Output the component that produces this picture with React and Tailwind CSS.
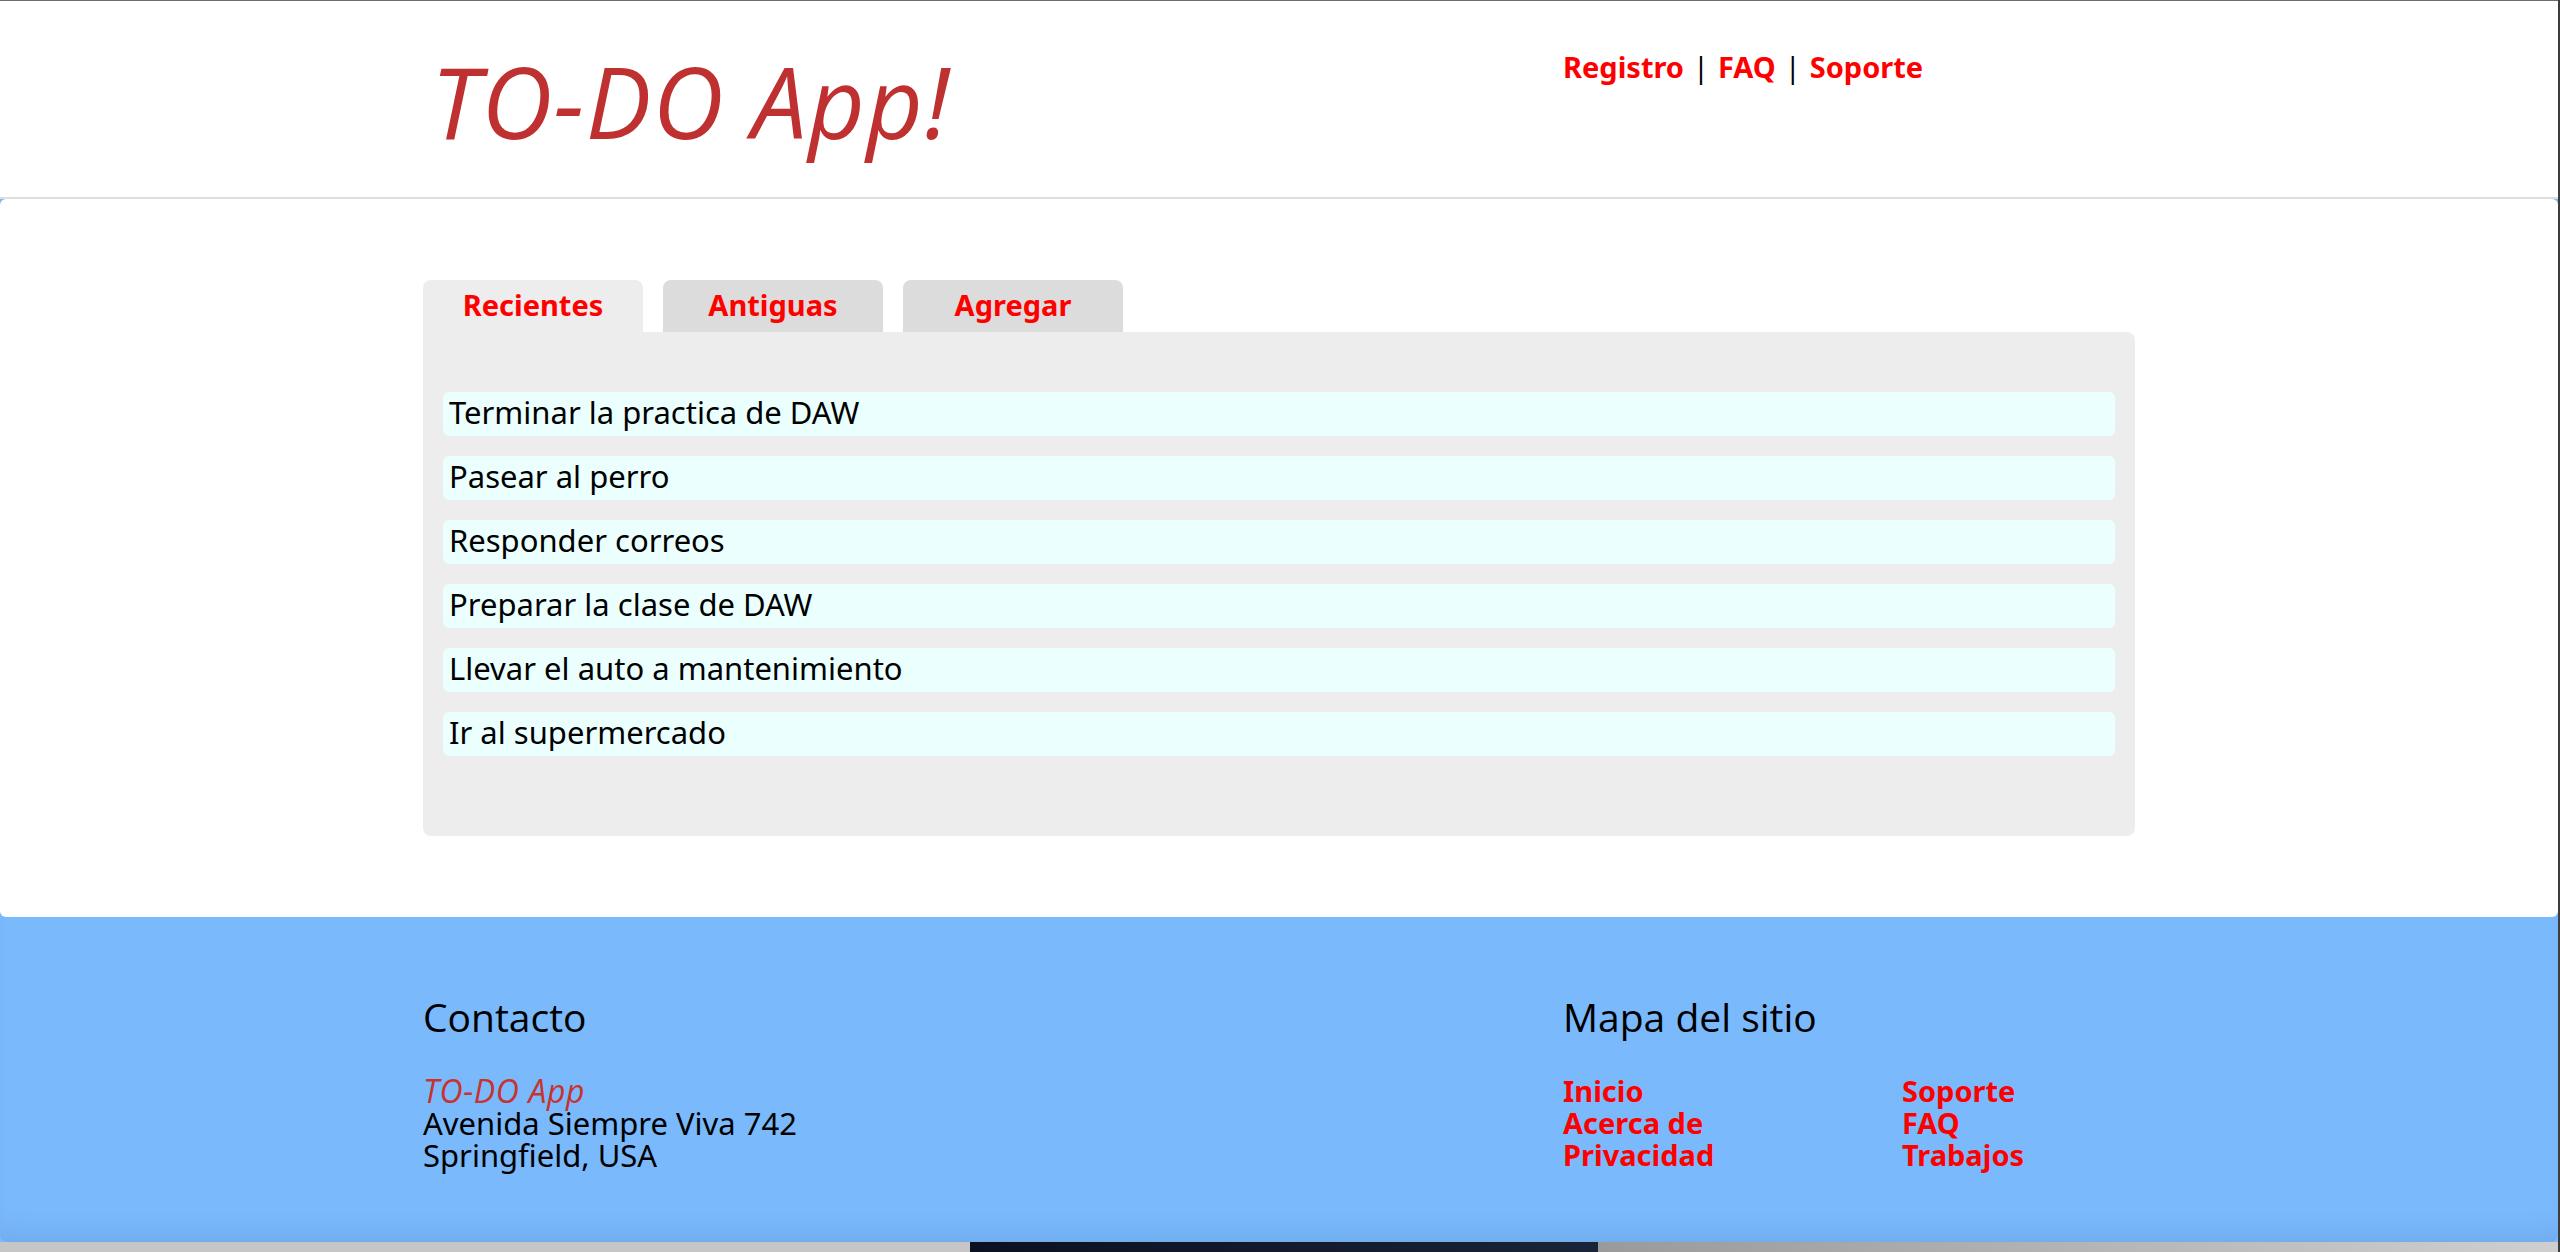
export default function App() {
  const tasks = [
    "Terminar la practica de DAW",
    "Pasear al perro",
    "Responder correos",
    "Preparar la clase de DAW",
    "Llevar el auto a mantenimiento",
    "Ir al supermercado",
  ];
  const tabs = ["Recientes", "Antiguas", "Agregar"];
  return (
    <div className="w-full h-[1252px] overflow-hidden bg-[#79b9fc] font-['Noto_Sans',sans-serif] flex flex-col border-r-2 border-[#3c3c3c]">
      <header className="h-[199px] shrink-0 bg-white border-t border-t-[#6b6d68] border-b-2 border-b-[#dedede]">
        <div className="w-[1712px] mx-auto flex items-start">
          <h1 className="w-[1140px] mt-[51px] text-[98px] leading-[98px] tracking-[1.5px] italic font-normal text-[#bf3030] font-['Open_Sans',sans-serif] pl-[8px]">
            TO-DO App!
          </h1>
          <nav className="mt-[50px] text-[29px] leading-[32px] flex items-start">
            <a className="font-bold text-[#ff0000]">Registro</a>
            <span className="mx-[9px] text-black font-normal">|</span>
            <a className="font-bold text-[#ff0000]">FAQ</a>
            <span className="mx-[9px] text-black font-normal">|</span>
            <a className="font-bold text-[#ff0000]">Soporte</a>
          </nav>
        </div>
      </header>

      <main className="h-[718px] shrink-0 bg-white rounded-md pt-[81px]">
        <div className="w-[1712px] mx-auto">
          <div className="flex gap-[20px]">
            {tabs.map((t, i) => (
              <div
                key={t}
                className={
                  i === 0
                    ? "w-[220px] h-[52px] rounded-t-lg bg-[#ededed] pt-[9px] text-center text-[29px] leading-[32px] font-bold text-[#ff0000]"
                    : "w-[220px] h-[52px] rounded-t-lg bg-[#dcdcdc] pt-[9px] text-center text-[29px] leading-[32px] font-bold text-[#ff0000]"
                }
              >
                {t}
              </div>
            ))}
          </div>
          <div className="h-[504px] bg-[#ededed] rounded-b-lg rounded-tr-lg pt-[60px] px-[20px] pb-[80px] flex flex-col gap-[20px]">
            {tasks.map((t) => (
              <div
                key={t}
                className="h-[44px] shrink-0 rounded-md bg-[#ebffff] pl-[6px] text-[31px] leading-[41px] text-black"
              >
                {t}
              </div>
            ))}
          </div>
        </div>
      </main>

      <footer className="h-[325px] shrink-0 bg-[#79b9fc] rounded-b-lg pt-[78px] shadow-[inset_0_-24px_28px_-16px_rgba(0,0,0,0.08)]">
        <div className="w-[1712px] mx-auto flex">
          <div className="w-[1140px]">
            <h2 className="text-[39px] leading-[44px] font-normal text-black font-['Open_Sans',sans-serif]">
              Contacto
            </h2>
            <div className="mt-[36px] text-[31px] leading-[32px] text-black">
              <div className="italic text-[#c8332f] text-[32px] tracking-[0.6px] font-['Open_Sans',sans-serif]">TO-DO App</div>
              <div>Avenida Siempre Viva 742</div>
              <div>Springfield, USA</div>
            </div>
          </div>
          <div>
            <h2 className="text-[39px] leading-[44px] font-normal text-black font-['Open_Sans',sans-serif]">
              Mapa del sitio
            </h2>
            <div className="mt-[36px] flex text-[29px] leading-[32px] font-bold text-[#ff0000]">
              <div className="w-[339px] flex flex-col">
                <a>Inicio</a>
                <a>Acerca de</a>
                <a>Privacidad</a>
              </div>
              <div className="flex flex-col">
                <a>Soporte</a>
                <a>FAQ</a>
                <a>Trabajos</a>
              </div>
            </div>
          </div>
        </div>
      </footer>

      <div className="h-[10px] shrink-0 flex bg-[#c9c9c9]">
        <div className="w-[970px] bg-[#c6c6c6]" />
        <div className="w-[628px] bg-gradient-to-r from-[#0b1120] to-[#1a2438]" />
        <div className="flex-1 bg-gradient-to-r from-[#9a9a9a] to-[#cfcfcf]" />
      </div>
    </div>
  );
}
